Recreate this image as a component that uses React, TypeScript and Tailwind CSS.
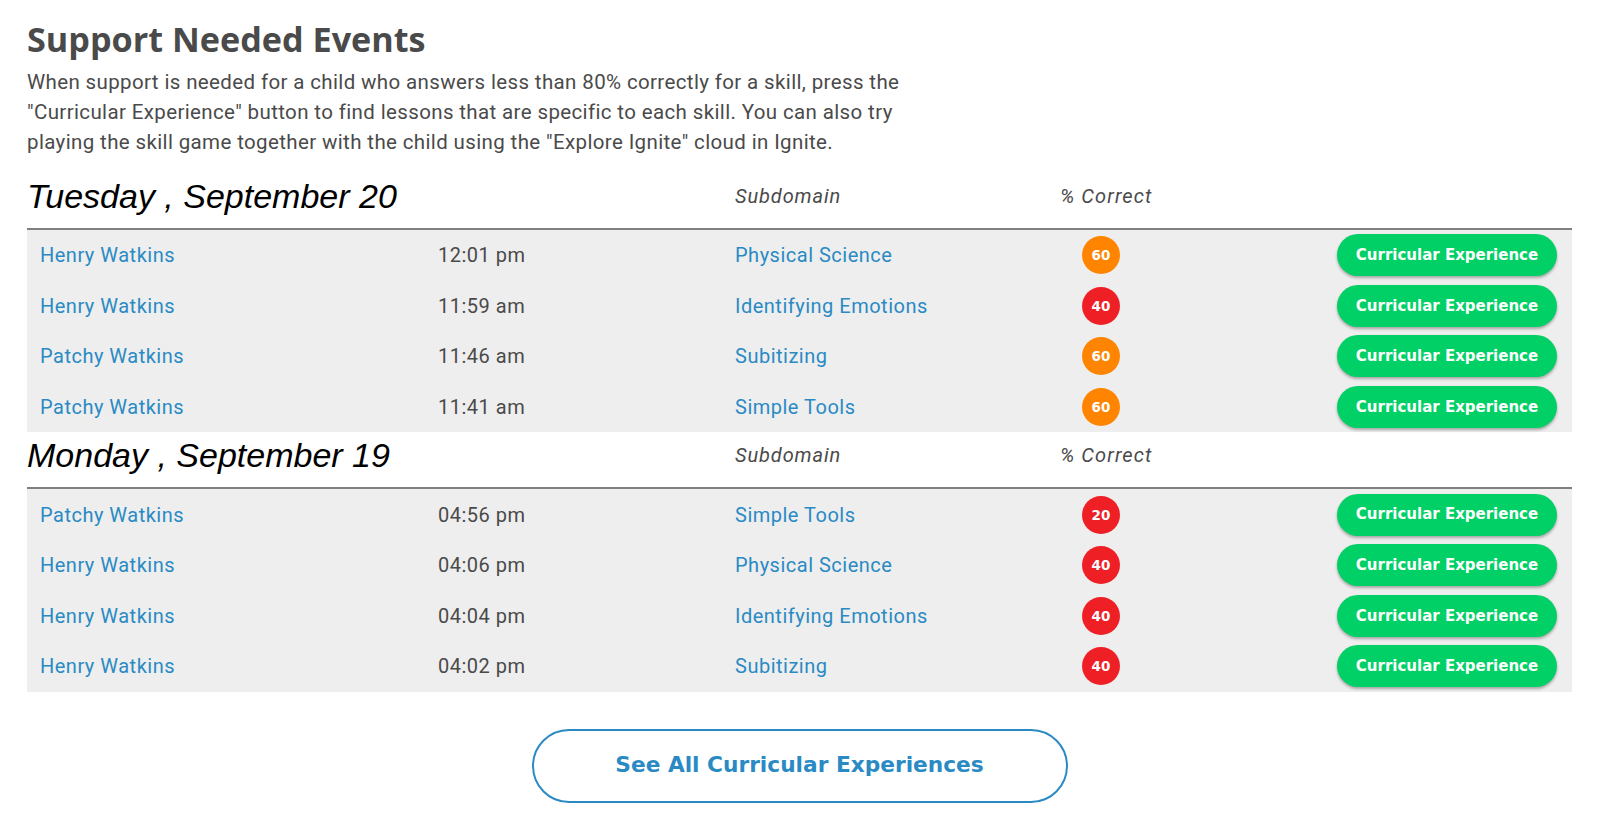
import React from "react";

type Row = { name: string; time: string; sub: string; pct: number };

const day1: Row[] = [
  { name: "Henry Watkins", time: "12:01 pm", sub: "Physical Science", pct: 60 },
  { name: "Henry Watkins", time: "11:59 am", sub: "Identifying Emotions", pct: 40 },
  { name: "Patchy Watkins", time: "11:46 am", sub: "Subitizing", pct: 60 },
  { name: "Patchy Watkins", time: "11:41 am", sub: "Simple Tools", pct: 60 },
];

const day2: Row[] = [
  { name: "Patchy Watkins", time: "04:56 pm", sub: "Simple Tools", pct: 20 },
  { name: "Henry Watkins", time: "04:06 pm", sub: "Physical Science", pct: 40 },
  { name: "Henry Watkins", time: "04:04 pm", sub: "Identifying Emotions", pct: 40 },
  { name: "Henry Watkins", time: "04:02 pm", sub: "Subitizing", pct: 40 },
];

function Section({ title, rows }: { title: string; rows: Row[] }) {
  return (
    <div>
      <div className="flex h-[57px] items-center border-b-2 border-[#808080] pb-[9px]">
        <div className="w-[708px] text-[34px] leading-[40px] italic text-black [font-family:'Liberation_Sans',Arial,sans-serif]">
          {title}
        </div>
        <div className="w-[325px] text-[20px] italic tracking-[0.9px] text-[#4a4a4a] [font-family:Roboto,sans-serif]">
          Subdomain
        </div>
        <div className="text-[20px] italic tracking-[1.1px] text-[#4a4a4a] [font-family:Roboto,sans-serif]">
          % Correct
        </div>
      </div>
      <div className="bg-[#eeeeee]">
        {rows.map((r, i) => (
          <div
            key={i}
            className="flex h-[50.6px] items-center pl-[13px] pr-[15px] text-[20px] tracking-[0.5px] [font-family:Roboto,sans-serif]"
          >
            <div className="w-[398px] text-[#2a8ac4]">{r.name}</div>
            <div className="w-[297px] text-[#4a4a4a]">{r.time}</div>
            <div className="w-[325px] text-[#2a8ac4]">{r.sub}</div>
            <div className="flex-1">
              <div
                className={
                  "ml-[22px] flex h-[38px] w-[38px] items-center justify-center rounded-full text-[13.5px] font-bold tracking-normal text-white [font-family:'DejaVu_Sans',sans-serif] " +
                  (r.pct >= 60 ? "bg-[#ff8400]" : "bg-[#ee2026]")
                }
              >
                {r.pct}
              </div>
            </div>
            <button className="h-[42px] w-[220px] rounded-full bg-[#00d065] text-[15px] font-bold tracking-normal text-white shadow-[0_2px_3px_rgba(0,0,0,0.3)] [font-family:'DejaVu_Sans',sans-serif]">
              Curricular Experience
            </button>
          </div>
        ))}
      </div>
    </div>
  );
}

export default function App() {
  return (
    <div className="h-[822px] w-full bg-white pl-[27px] pr-[26px] pt-[19px] [font-family:Roboto,sans-serif]">
      <h1 className="text-[34.2px] leading-[40px] font-bold text-[#4a4a4a] [font-family:'Open_Sans',sans-serif]">
        Support Needed Events
      </h1>
      <p className="mt-[7.5px] text-[20.5px] leading-[30px] tracking-[0.37px] text-[#4a4a4a]">
        When support is needed for a child who answers less than 80% correctly for a skill, press the
        <br />
        "Curricular Experience" button to find lessons that are specific to each skill. You can also try
        <br />
        playing the skill game together with the child using the "Explore Ignite" cloud in Ignite.
      </p>
      <div className="mt-[16.5px]">
        <Section title="Tuesday , September 20" rows={day1} />
        <Section title="Monday , September 19" rows={day2} />
      </div>
      <div className="mt-[37px] flex justify-center">
        <button className="h-[74px] w-[536px] rounded-full border-2 border-[#2a8ac4] text-[21.7px] font-bold text-[#2a8ac4] [font-family:'DejaVu_Sans',sans-serif]">
          See All Curricular Experiences
        </button>
      </div>
    </div>
  );
}
